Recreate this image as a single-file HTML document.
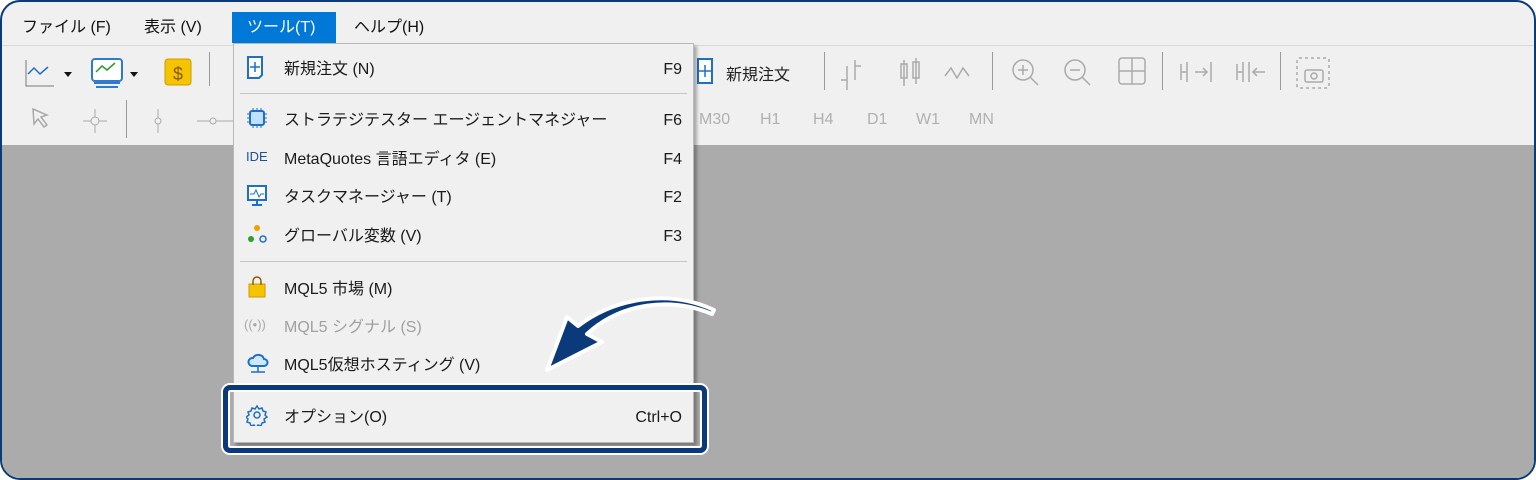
<!DOCTYPE html>
<html><head><meta charset="utf-8"><style>
*{margin:0;padding:0;box-sizing:border-box}
svg{display:block}
body{width:1536px;height:480px;background:#fff;overflow:hidden;font-family:"Liberation Sans","Noto Sans CJK JP",sans-serif;position:relative}
#frame{position:absolute;left:0;top:0;width:1536px;height:480px;border:2px solid #0b3a7a;border-radius:20px;overflow:hidden;background:#f0f0f0}
.gray{position:absolute;left:0;top:143px;width:1536px;height:340px;background:#ababab}
.mb{position:absolute;top:10px;height:31px;line-height:31px;font-size:16px;color:#111;padding:0 12px}
.t{position:absolute;font-size:16px;color:#222;white-space:nowrap}
.tg{position:absolute;font-size:16px;color:#b0b0b0;white-space:nowrap}
.vs{position:absolute;width:1px;background:#9a9a9a}
#menu{position:absolute;left:231px;top:41px;width:461px;height:400px;background:#f0f0f0;border:1px solid #b8b8b8;box-shadow:3px 3px 3px rgba(0,0,0,.3)}
.it{position:absolute;left:50px;font-size:16px;height:20px;line-height:20px;margin-top:-10px;color:#1a1a1a;white-space:nowrap}
.sc{position:absolute;right:11px;font-size:16px;height:20px;line-height:20px;margin-top:-10px;color:#1a1a1a}
.sep{position:absolute;left:6px;right:6px;height:1px;background:#c6c6c6}
.ic{position:absolute;left:12px;transform:translateY(-50%);margin-top:-3px}
div.ic{line-height:14px}
</style></head><body>
<div id="frame">
<div class="gray"></div>
<div class="mb" style="left:8px">ファイル (F)</div>
<div class="mb" style="left:130px">表示 (V)</div>
<div class="mb" style="left:230px;width:104px;background:#0078d7;color:#fff;padding-left:15px">ツール(T)</div>
<div class="mb" style="left:340px">ヘルプ(H)</div>
<div style="position:absolute;left:0;top:43px;width:1536px;height:1px;background:#d8d8d8"></div>
<svg style="position:absolute;left:20px;top:52px" width="200" height="36">
<path d="M4 6 V32 H32" stroke="#777" fill="none"/><path d="M6 20 l6-6 6 6 8-7" stroke="#1e6fc8" fill="none" stroke-width="1.5"/>
<path d="M42 18h8l-4 5z" fill="#111"/>
<rect x="70" y="5" width="30" height="22" rx="3" fill="#fff" stroke="#2c7bd0" stroke-width="2"/><path d="M74 18l6-6 5 4 8-7" stroke="#2a9a2a" fill="none" stroke-width="1.5"/><path d="M72 29h26M74 33h22" stroke="#2c7bd0" stroke-width="2"/>
<path d="M108 18h8l-4 5z" fill="#111"/>
<rect x="143" y="5" width="26" height="26" rx="3" fill="#f5c400" stroke="#d09a00"/><text x="156" y="26" font-size="18" text-anchor="middle" fill="#8a5a00" font-family="Liberation Sans">$</text>
</svg>
<div class="vs" style="left:207px;top:50px;height:34px"></div>
<div class="vs" style="left:124px;top:98px;height:38px"></div>
<svg style="position:absolute;left:25px;top:103px" width="210" height="32">
<path d="M6 4l14 6-6 2 6 8-3 2-6-8-4 5z" fill="none" stroke="#aaa" stroke-width="1.5"/>
<path d="M68 4v24M56 16h24" stroke="#aaa"/><circle cx="68" cy="16" r="4" fill="#f0f0f0" stroke="#aaa"/>
<path d="M131 4v24" stroke="#aaa"/><circle cx="131" cy="16" r="3" fill="#f0f0f0" stroke="#aaa"/>
<path d="M170 16h40" stroke="#aaa"/><circle cx="186" cy="16" r="3" fill="#f0f0f0" stroke="#aaa"/>
</svg>
<svg style="position:absolute;left:694px;top:55px" width="20" height="30"><path d="M2 2h14v24H2z" fill="#fff" stroke="#1e6fc8" stroke-width="2"/><path d="M9 8v12M3 14h12" stroke="#1e6fc8" stroke-width="1.5"/></svg>
<div class="t" style="left:724px;top:59px">新規注文</div>
<div class="vs" style="left:822px;top:50px;height:38px"></div>
<div class="vs" style="left:990px;top:50px;height:38px"></div>
<div class="vs" style="left:1160px;top:50px;height:38px"></div>
<div class="vs" style="left:1278px;top:50px;height:38px"></div>
<svg style="position:absolute;left:835px;top:50px" width="500" height="44" fill="none" stroke="#aaa" stroke-width="1.5">
<path d="M10 14v24M4 28h6M18 8v20M18 14h6"/>
<rect x="64" y="12" width="6" height="14"/><rect x="76" y="10" width="6" height="16"/><path d="M67 8v26M79 6v26"/>
<path d="M108 24l6-8 6 10 6-10 6 8"/>
<circle cx="186" cy="18" r="10"/><path d="M193 25l8 8M186 13v10M181 18h10"/>
<circle cx="238" cy="18" r="10"/><path d="M245 25l8 8M233 18h10"/>
<rect x="282" y="6" width="26" height="26" rx="3"/><path d="M295 6v26M282 19h26"/>
<path d="M344 12v16M350 10v20M344 20h6M358 20h12M366 16l4 4-4 4M374 10v20"/>
<path d="M400 12v16M406 10v20M400 20h6M412 10v20M428 20h-12M420 16l-4 4 4 4"/>
<rect x="460" y="6" width="32" height="30" rx="2" stroke-dasharray="3 3"/><rect x="468" y="18" width="18" height="12" rx="2"/><circle cx="477" cy="24" r="3"/>
</svg>
<div class="tg" style="left:697px;top:109px">M30</div>
<div class="tg" style="left:758px;top:109px">H1</div>
<div class="tg" style="left:811px;top:109px">H4</div>
<div class="tg" style="left:865px;top:109px">D1</div>
<div class="tg" style="left:914px;top:109px">W1</div>
<div class="tg" style="left:967px;top:109px">MN</div>

<div id="menu">
<svg class="ic" style="top:26px" width="20" height="24"><path d="M2 2h14v18l-3 3H2z" fill="#fff" stroke="#1e6fc8" stroke-width="2"/><path d="M9 7v10M4 12h10" stroke="#1e6fc8" stroke-width="1.5"/></svg>
<div class="it" style="top:26px">新規注文 (N)</div><div class="sc" style="top:26px">F9</div>
<div class="sep" style="top:49px"></div>
<svg class="ic" style="top:77px" width="22" height="22"><rect x="4" y="4" width="14" height="14" rx="2" fill="#bfe0ff" stroke="#1e6fc8" stroke-width="2"/><path d="M1 7h3M1 11h3M1 15h3M18 7h3M18 11h3M18 15h3M7 1v3M11 1v3M15 1v3M7 18v3M11 18v3M15 18v3" stroke="#1e6fc8"/></svg>
<div class="it" style="top:77px">ストラテジテスター エージェントマネジャー</div><div class="sc" style="top:77px">F6</div>
<div class="ic" style="top:116px;font-size:13px;color:#1e4f9c">IDE</div>
<div class="it" style="top:116px">MetaQuotes 言語エディタ (E)</div><div class="sc" style="top:116px">F4</div>
<svg class="ic" style="top:154px" width="22" height="22"><rect x="2" y="2" width="18" height="14" fill="#fff" stroke="#1e6fc8" stroke-width="2"/><path d="M4 10h4l2-4 3 7 2-3h3" stroke="#1e6fc8" fill="none"/><path d="M11 16v4M6 21h10" stroke="#1e6fc8" stroke-width="2"/></svg>
<div class="it" style="top:154px">タスクマネージャー (T)</div><div class="sc" style="top:154px">F2</div>
<svg class="ic" style="top:193px" width="22" height="22"><circle cx="11" cy="5" r="3" fill="#f0a000"/><circle cx="5" cy="16" r="3" fill="#2ca02c"/><circle cx="17" cy="16" r="3" fill="none" stroke="#1e6fc8" stroke-width="1.5"/></svg>
<div class="it" style="top:193px">グローバル変数 (V)</div><div class="sc" style="top:193px">F3</div>
<div class="sep" style="top:217px"></div>
<svg class="ic" style="top:246px" width="22" height="22"><path d="M3 8h16v13H3z" fill="#f5c400" stroke="#d09a00"/><path d="M7 9V5a4 4 0 0 1 8 0v4" stroke="#8a6000" fill="none" stroke-width="1.5"/></svg>
<div class="it" style="top:246px">MQL5 市場 (M)</div>
<div class="ic" style="top:284px;left:10px;font-size:13px;color:#aaa">((•))</div>
<div class="it" style="top:284px;color:#a0a0a0">MQL5 シグナル (S)</div>
<svg class="ic" style="top:322px" width="24" height="24"><path d="M6 15a4 4 0 0 1 1-8 6 6 0 0 1 11 1 3.5 3.5 0 0 1 0 7z" fill="#cfe8ff" stroke="#1e6fc8" stroke-width="2"/><path d="M12 15v6M5 21h14" stroke="#1e6fc8" stroke-width="1.5"/></svg>
<div class="it" style="top:322px">MQL5仮想ホスティング (V)</div>
<svg class="ic" style="top:374px" width="22" height="22"><circle cx="11" cy="11" r="3" fill="none" stroke="#1e6fc8" stroke-width="1.5"/><path d="M11 2l2 3 3-1 1 3 3 1-1 3 2 2-3 2 1 3-3 1-1 3-3-1-2 3-2-3-3 1-1-3-3-1 1-3-2-2 3-2-1-3 3-1 1-3 3 1z" fill="none" stroke="#1e6fc8" stroke-width="1.5"/></svg>
<div class="it" style="top:374px">オプション(O)</div><div class="sc" style="top:374px">Ctrl+O</div>
</div>
<div style="position:absolute;left:219px;top:381px;width:488px;height:72px;border-radius:9px;border:2px solid #fff"><div style="position:absolute;inset:0;border:5px solid #0b3a7a;border-radius:7px"><div style="position:absolute;inset:0;border:2px solid #fff;border-radius:3px"></div></div></div>
<svg style="position:absolute;left:530px;top:290px" width="200" height="100">
<path d="M180 22 C140 5 90 10 55 42 L70 50 L15 78 L35 25 L46 34 C85 4 140 -2 182 18 Z" fill="#0b3a7a" stroke="#fff" stroke-width="4" stroke-linejoin="round"/>
</svg>
</div>
</body></html>
